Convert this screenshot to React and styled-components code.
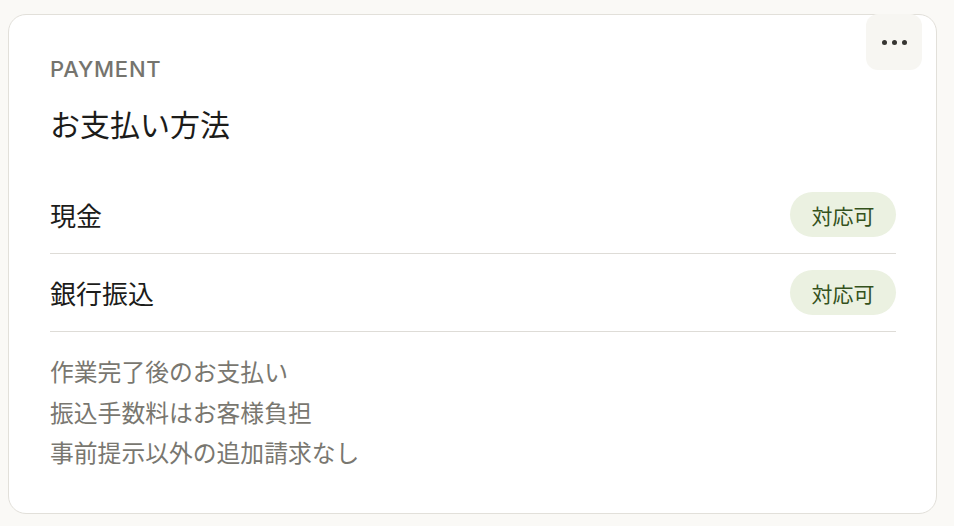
import styled, { createGlobalStyle } from 'styled-components';

const GlobalStyle = createGlobalStyle`
    html, body {
        margin: 0;
        padding: 0;
        background: #faf9f6;
    }
    body {
        padding: 14px 17px 12px 8px;
        font-family: Inter, "Noto Sans CJK JP", sans-serif;
    }
`

const methods = [
    { name: '現金', status: '対応可' },
    { name: '銀行振込', status: '対応可' },
];

const notes = [
    '作業完了後のお支払い',
    '振込手数料はお客様負担',
    '事前提示以外の追加請求なし',
];

const App = () => {
    return (
        <>
            <GlobalStyle />
            <Card>
                <MoreButton aria-label="more">
                    <Dot /><Dot /><Dot />
                </MoreButton>
                <Eyebrow>PAYMENT</Eyebrow>
                <Title>お支払い方法</Title>
                <MethodList>
                    {methods.map(m => (
                        <MethodRow key={m.name}>
                            <MethodName>{m.name}</MethodName>
                            <Badge>{m.status}</Badge>
                        </MethodRow>
                    ))}
                </MethodList>
                <NoteList>
                    {notes.map(n => <Note key={n}>{n}</Note>)}
                </NoteList>
            </Card>
        </>
    )
}

const Card = styled.section`
    position: relative;
    box-sizing: border-box;
    height: 500px;
    background: #ffffff;
    border: 1px solid #e2e0da;
    border-radius: 18px;
    padding: 41px 40px 0 41px;
`

const MoreButton = styled.button`
    position: absolute;
    top: -1px;
    right: 14px;
    width: 56px;
    height: 56px;
    border: none;
    border-radius: 12px;
    background: #f7f6f2;
    display: flex;
    align-items: center;
    justify-content: center;
    gap: 5px;
    padding: 0;
    cursor: pointer;
`

const Dot = styled.span`
    width: 5px;
    height: 5px;
    border-radius: 50%;
    background: #363532;
`

const Eyebrow = styled.div`
    font-family: Inter, sans-serif;
    font-size: 22px;
    line-height: 26px;
    font-weight: 500;
    letter-spacing: 0.035em;
    color: #75746e;
`

const Title = styled.h2`
    margin: 22px 0 0;
    font-family: "Noto Sans CJK JP", sans-serif;
    font-size: 30px;
    line-height: 38px;
    font-weight: 400;
    color: #1c1c1a;
`

const MethodList = styled.div`
    margin-top: 34px;
    display: flex;
    flex-direction: column;
`

const MethodRow = styled.div`
    display: flex;
    align-items: center;
    justify-content: space-between;
    padding: 16px 0;
    border-bottom: 1px solid #dedcd7;
`

const MethodName = styled.span`
    font-family: "Noto Sans CJK JP", sans-serif;
    font-size: 26px;
    color: #1c1c1a;
`

const Badge = styled.span`
    display: flex;
    align-items: center;
    justify-content: center;
    width: 106px;
    height: 45px;
    border-radius: 23px;
    background: #ebf1e1;
    color: #34521c;
    font-family: "Noto Sans CJK JP", sans-serif;
    font-size: 21px;
`

const NoteList = styled.ul`
    list-style: none;
    margin: 19px 0 0;
    padding: 0;
`

const Note = styled.li`
    font-family: "Noto Sans CJK JP", sans-serif;
    font-size: 23.8px;
    line-height: 40.5px;
    color: #797770;
`

export default App;
